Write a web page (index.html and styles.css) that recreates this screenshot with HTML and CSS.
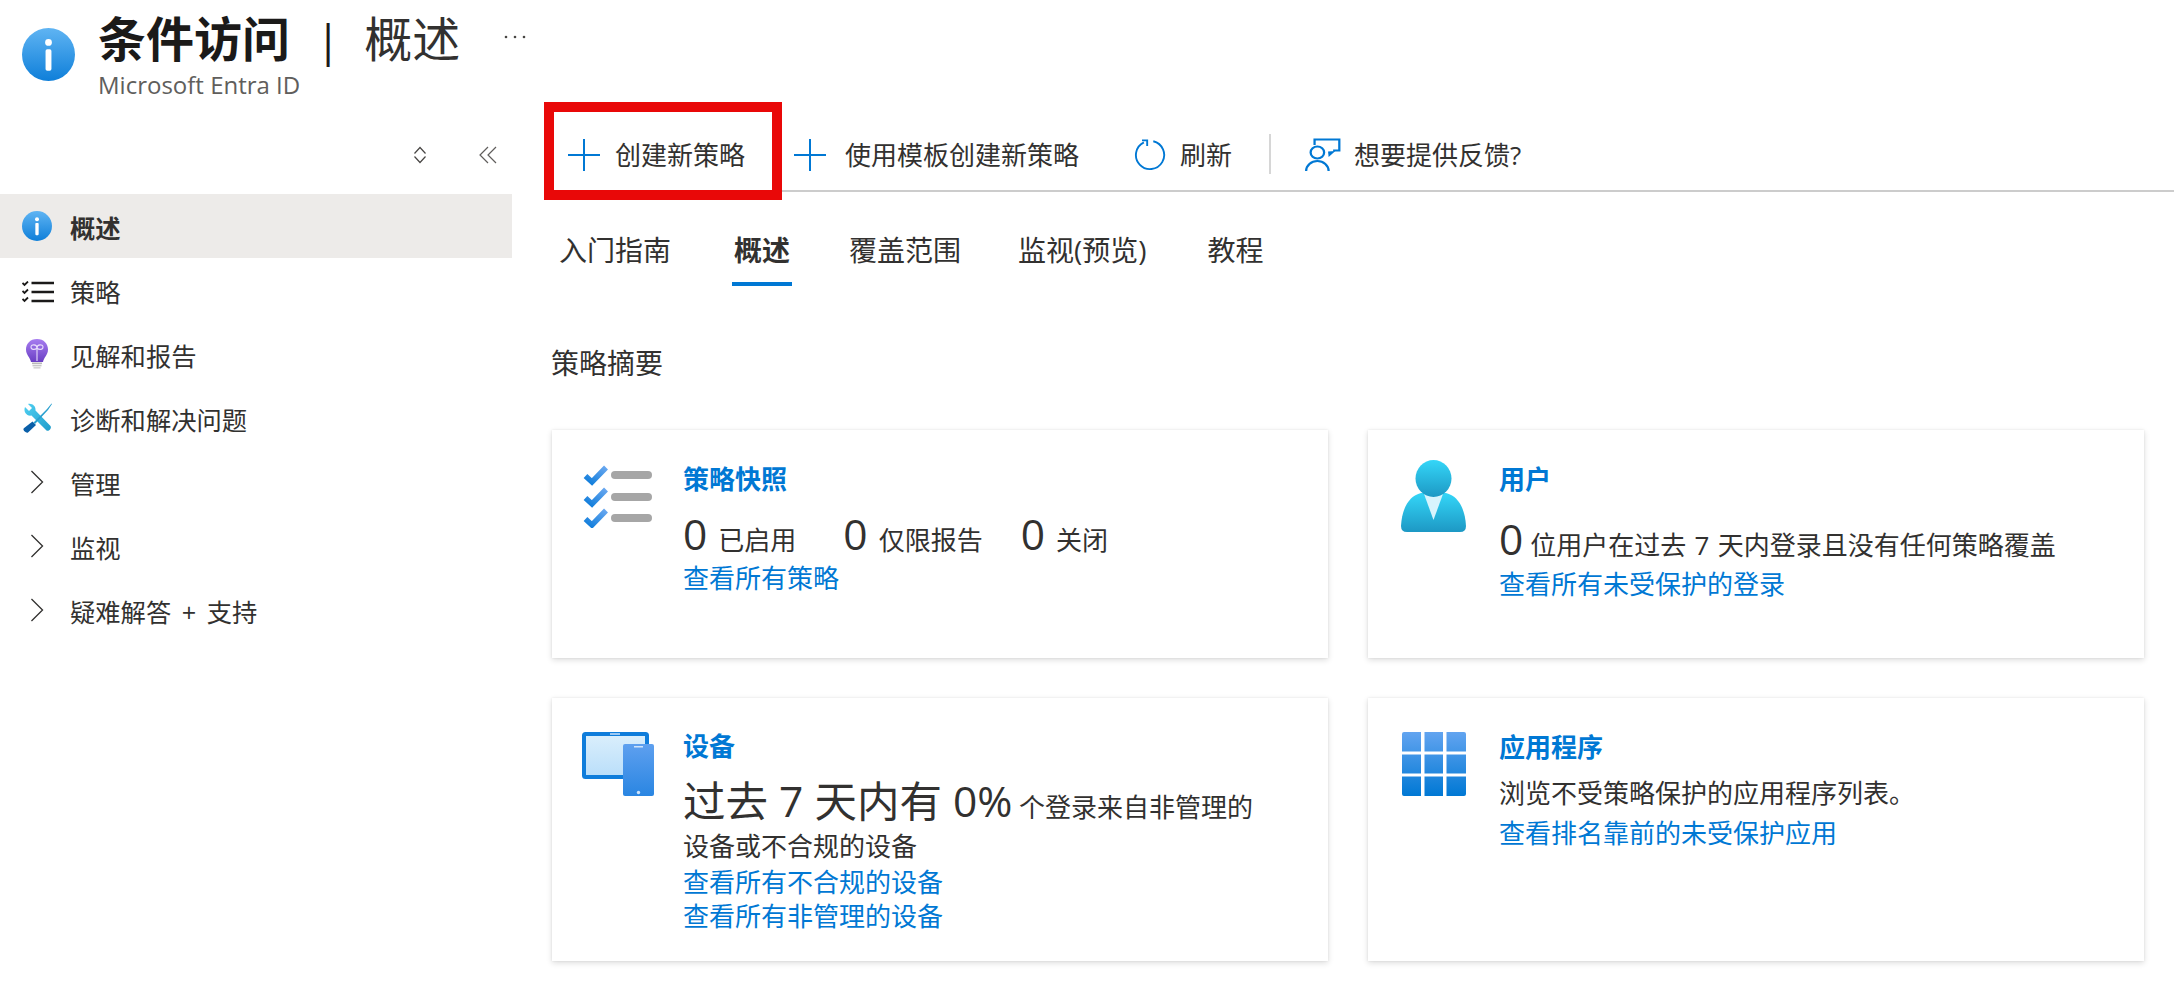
FILE: index.html
```html
<!DOCTYPE html>
<html lang="zh-CN">
  <head>
    <meta charset="UTF-8" />
    <title>条件访问 | 概述</title>
    <link rel="stylesheet" href="styles.css">
  </head>
  <body>
    <svg class="defs" width="0" height="0">
      <defs>
        <linearGradient id="gradInfo" x1="0" y1="0" x2="0" y2="1">
          <stop offset="0" stop-color="#5fb4f3" />
          <stop offset="1" stop-color="#0f7fd9" />
        </linearGradient>
        <linearGradient id="gradBulb" x1="0" y1="0" x2="0" y2="1">
          <stop offset="0" stop-color="#a77df0" />
          <stop offset="1" stop-color="#6a3fc4" />
        </linearGradient>
        <linearGradient id="gradWrench" x1="0" y1="0" x2="1" y2="1">
          <stop offset="0" stop-color="#4fd0f2" />
          <stop offset="1" stop-color="#1f9ccb" />
        </linearGradient>
        <linearGradient id="gradCheck" gradientUnits="userSpaceOnUse" x1="20" y1="0" x2="8" y2="20">
          <stop offset="0" stop-color="#6aa8f0" />
          <stop offset="1" stop-color="#0f7ddb" />
        </linearGradient>
        <linearGradient id="gradUser" x1="0" y1="0" x2="0" y2="1">
          <stop offset="0" stop-color="#34d6f8" />
          <stop offset="1" stop-color="#1d98c4" />
        </linearGradient>
        <linearGradient id="gradScreen" x1="0" y1="0" x2="0" y2="1">
          <stop offset="0" stop-color="#dbeffc" />
          <stop offset="1" stop-color="#b9defa" />
        </linearGradient>
        <linearGradient id="gradPhone" x1="0" y1="0" x2="0" y2="1">
          <stop offset="0" stop-color="#5ea0ef" />
          <stop offset="1" stop-color="#2a86e2" />
        </linearGradient>
        <linearGradient id="gradGrid" gradientUnits="userSpaceOnUse" x1="0" y1="0" x2="0" y2="64">
          <stop offset="0" stop-color="#62a4f0" />
          <stop offset="1" stop-color="#0078d4" />
        </linearGradient>
      </defs>
    </svg>

    <header class="blade-header">
      <svg class="blade-icon" viewBox="0 0 18 18">
        <circle cx="9" cy="9" r="9" fill="url(#gradInfo)" />
        <circle cx="9" cy="4.9" r="1.15" fill="#fff" />
        <rect x="8" y="7.2" width="2" height="7.3" rx="0.6" fill="#fff" />
      </svg>
      <div class="blade-titles">
        <h1 class="blade-title">
          <span class="title-main">条件访问</span>
          <span class="title-sep">|</span>
          <span class="title-sub">概述</span>
          <svg class="title-more" viewBox="0 0 24 4">
            <circle cx="3" cy="2" r="1.3" />
            <circle cx="12" cy="2" r="1.3" />
            <circle cx="21" cy="2" r="1.3" />
          </svg>
        </h1>
        <div class="blade-subtitle">Microsoft Entra ID</div>
      </div>
    </header>

    <div class="blade-body">
      <aside class="sidebar">
        <div class="sidebar-tools">
          <svg class="tool-sort" viewBox="0 0 14 18">
            <path d="M1.5 7.5 L7 1.5 L12.5 7.5 M1.5 10.5 L7 16.5 L12.5 10.5" />
          </svg>
          <svg class="tool-collapse" viewBox="0 0 18 18">
            <path d="M9 1 L1 9 L9 17 M17 1 L9 9 L17 17" />
          </svg>
        </div>
        <nav>
          <a class="nav-item active">
            <svg class="nav-icon" viewBox="0 0 18 18">
              <circle cx="9" cy="9" r="9" fill="url(#gradInfo)" />
              <circle cx="9" cy="4.9" r="1.2" fill="#fff" />
              <rect x="8" y="7.2" width="2" height="7.3" rx="0.5" fill="#fff" />
            </svg>
            <span>概述</span>
          </a>
          <a class="nav-item">
            <svg class="nav-icon nav-list" viewBox="0 0 32 24">
              <path class="list-check" d="M0.5 2 L2.5 4 L6 0.5 M0.5 10 L2.5 12 L6 8.5 M0.5 18 L2.5 20 L6 16.5" />
              <path class="list-line" d="M9.5 2 H32 M9.5 11 H32 M9.5 20 H32" />
            </svg>
            <span>策略</span>
          </a>
          <a class="nav-item">
            <svg class="nav-icon" viewBox="0 0 30 30">
              <path d="M15 0 C8 0 4 5 4 10.5 C4 16 8 18 9 23 H21 C22 18 26 16 26 10.5 C26 5 22 0 15 0 Z" fill="url(#gradBulb)" />
              <path d="M15 22 V9 M15 9 C15 5 9 5 9 8 C9 11 13 11 15 9 C17 11 21 11 21 8 C21 5 15 5 15 9" fill="none" stroke="#e8dcfb" stroke-width="1.1" />
              <rect x="10" y="23.5" width="10" height="1.6" fill="#b9b9b9" />
              <rect x="10.5" y="25.8" width="9" height="1.6" fill="#c8c8c8" />
              <rect x="11.5" y="28" width="7" height="1.6" fill="#d4d4d4" />
            </svg>
            <span>见解和报告</span>
          </a>
          <a class="nav-item">
            <svg class="nav-icon" viewBox="0 0 30 30">
              <path d="M3 4 L7 8 L10 5 L6 1 C10 0 14 3 13.5 7.5 L28.5 23 C30 25 27 29 24.5 27.5 L9.5 12.5 C5 13.5 1 9 3 4 Z" fill="url(#gradWrench)" />
              <path d="M10.5 18.5 L14 22 L6 29.5 C4 30.5 0.5 27.5 1.8 25.3 Z" fill="#0a5fa8" />
              <path d="M11.5 19.5 L25 6 L29.5 0.5 L30 1 L26 7 L13 21 Z" fill="#2aa0cf" />
            </svg>
            <span>诊断和解决问题</span>
          </a>
          <a class="nav-item">
            <svg class="nav-icon nav-chevron" viewBox="0 0 14 26"><path d="M1 1 L13 13 L1 25" /></svg>
            <span>管理</span>
          </a>
          <a class="nav-item">
            <svg class="nav-icon nav-chevron" viewBox="0 0 14 26"><path d="M1 1 L13 13 L1 25" /></svg>
            <span>监视</span>
          </a>
          <a class="nav-item">
            <svg class="nav-icon nav-chevron" viewBox="0 0 14 26"><path d="M1 1 L13 13 L1 25" /></svg>
            <span class="nav-wide">疑难解答 + 支持</span>
          </a>
        </nav>
      </aside>

      <main class="content">
        <div class="toolbar">
          <button class="tool-btn highlighted">
            <svg class="tool-icon" viewBox="0 0 32 32"><path d="M16 0 V32 M0 16 H32" /></svg>
            <span>创建新策略</span>
          </button>
          <button class="tool-btn tool-template">
            <svg class="tool-icon" viewBox="0 0 32 32"><path d="M16 0 V32 M0 16 H32" /></svg>
            <span>使用模板创建新策略</span>
          </button>
          <button class="tool-btn tool-refresh">
            <svg class="tool-icon" viewBox="0 0 32 34">
              <path d="M19.5 2.4 A15 15 0 1 1 9.5 3.5" />
              <path d="M7.5 1.5 H13 V7.5" />
            </svg>
            <span>刷新</span>
          </button>
          <div class="tool-divider"></div>
          <button class="tool-btn tool-feedback">
            <svg class="tool-icon icon-feedback" viewBox="0 0 32 34" preserveAspectRatio="none">
              <path d="M8.5 7 V1.5 H30.5 V12.5 H25" />
              <path d="M27 13 L21 19 L20.5 13.5 Z" class="tail" />
              <circle cx="11" cy="14.5" r="6" />
              <path d="M1 33 A10 10 0 0 1 21 33" />
            </svg>
            <span>想要提供反馈?</span>
          </button>
        </div>

        <div class="tabs">
          <a class="tab">入门指南</a>
          <a class="tab active">概述</a>
          <a class="tab">覆盖范围</a>
          <a class="tab">监视(预览)</a>
          <a class="tab">教程</a>
        </div>

        <h2 class="section-title">策略摘要</h2>

        <div class="cards">
          <section class="card card-short">
            <div class="card-icon">
              <svg width="69" height="63" viewBox="0 0 69 63">
                <g id="checkRow">
                  <path d="M2.5 11 L9 17 L23 2.5" fill="none" stroke="url(#gradCheck)" stroke-width="5.5" />
                  <rect x="28" y="6" width="41" height="8" rx="4" fill="#a6a6a6" />
                </g>
                <use href="#checkRow" y="22" />
                <use href="#checkRow" y="43" />
              </svg>
            </div>
            <div class="card-main">
              <a class="card-title">策略快照</a>
              <div class="stats">
                <span class="stat"><span class="big">0</span>已启用</span>
                <span class="stat"><span class="big">0</span>仅限报告</span>
                <span class="stat"><span class="big">0</span>关闭</span>
              </div>
              <a class="card-link">查看所有策略</a>
            </div>
          </section>

          <section class="card card-short">
            <div class="card-icon">
              <svg width="65" height="72" viewBox="0 0 65 72">
                <path d="M0 66 C1 48 8 36 20 33 H45 C57 36 64 48 65 66 Q65 72 59 72 H6 Q0 72 0 66 Z" fill="url(#gradUser)" />
                <path d="M23 34 H42 L32.5 60 Z" fill="#d8f4fd" />
                <ellipse cx="32.5" cy="18.5" rx="18" ry="18.5" fill="url(#gradUser)" />
              </svg>
            </div>
            <div class="card-main">
              <a class="card-title">用户</a>
              <p class="user-line"><span class="big">0</span>位用户在过去 7 天内登录且没有任何策略覆盖</p>
              <a class="card-link">查看所有未受保护的登录</a>
            </div>
          </section>

          <section class="card">
            <div class="card-icon">
              <svg width="72" height="64" viewBox="0 0 72 64">
                <rect x="2" y="2" width="63" height="43" rx="1.5" fill="url(#gradScreen)" stroke="#0f7ddb" stroke-width="4" />
                <rect x="28" y="1" width="10" height="2" fill="#9cc8f2" />
                <rect x="41" y="12" width="31" height="52" rx="2" fill="url(#gradPhone)" />
                <rect x="52" y="14" width="9" height="1.5" fill="#cfe4fb" />
                <circle cx="56.5" cy="60.5" r="1.7" fill="#cfe4fb" />
              </svg>
            </div>
            <div class="card-main card-device">
              <a class="card-title">设备</a>
              <p class="device-line"><span class="big">过去 7 天内有 0%</span> 个登录来自非管理的<br>设备或不合规的设备</p>
              <a class="card-link">查看所有不合规的设备</a>
              <a class="card-link">查看所有非管理的设备</a>
            </div>
          </section>

          <section class="card">
            <div class="card-icon">
              <svg width="64" height="64" viewBox="0 0 64 64">
                <path fill="url(#gradGrid)" d="M0 2 Q0 0 2 0 H19 V19.5 H0 Z M22.5 0 H41 V19.5 H22.5 Z M44.5 0 H62 Q64 0 64 2 V19.5 H44.5 Z M0 22.5 H19 V41.5 H0 Z M22.5 22.5 H41 V41.5 H22.5 Z M44.5 22.5 H64 V41.5 H44.5 Z M0 44.5 H19 V64 H2 Q0 64 0 62 Z M22.5 44.5 H41 V64 H22.5 Z M44.5 44.5 H64 V62 Q64 64 62 64 H44.5 Z" />
              </svg>
            </div>
            <div class="card-main">
              <a class="card-title">应用程序</a>
              <p class="app-line">浏览不受策略保护的应用程序列表。</p>
              <a class="card-link">查看排名靠前的未受保护应用</a>
            </div>
          </section>
        </div>
      </main>
    </div>
  </body>
</html>
```

FILE: styles.css
```css
:root {
  --text-color: #323130;
  --title-color: #1b1a19;
  --muted-color: #605e5c;
  --link-color: #0078d4;
  --line-color: #cccccc;
  --active-bg: #edebe9;
  --mark-color: #e90808;
}
html,
body {
  margin: 0;
  padding: 0;
  background: #fff;
  color: var(--text-color);
  font-family: "Open Sans", "Noto Sans CJK SC", sans-serif;
}
body {
  width: 2174px;
  height: 1006px;
  overflow: hidden;
}
.defs {
  position: absolute;
}

/* Header */
.blade-header {
  display: flex;
  height: 100px;
  padding-left: 22px;
  gap: 23px;
  box-sizing: border-box;
}
.blade-icon {
  width: 53px;
  height: 53px;
  margin-top: 28px;
}
.blade-titles {
  padding-top: 11px;
}
.blade-title {
  display: flex;
  align-items: center;
  height: 56px;
  margin: 0;
  font-size: 48px;
  font-weight: 400;
  line-height: 56px;
  color: var(--title-color);
}
.title-main {
  font-weight: 700;
}
.title-sep {
  margin: 0 24px 0 26px;
  font-size: 44px;
  font-weight: 400;
}
.title-sub {
  color: var(--text-color);
}
.title-more {
  width: 24px;
  height: 4px;
  margin: 0 0 4px 43px;
  fill: #484644;
}
.blade-subtitle {
  margin-top: 3px;
  font-size: 24px;
  line-height: 30px;
  color: var(--muted-color);
}

.blade-body {
  display: flex;
}

/* Sidebar */
.sidebar {
  flex: none;
  width: 512px;
}
.sidebar-tools {
  display: flex;
  justify-content: flex-end;
  align-items: center;
  gap: 52px;
  height: 94px;
  padding: 16px 15px 0 0;
  box-sizing: border-box;
}
.tool-sort {
  width: 14px;
  height: 18px;
  fill: none;
  stroke: #484644;
  stroke-width: 1.2;
}
.tool-collapse {
  width: 18px;
  height: 18px;
  fill: none;
  stroke: #605e5c;
  stroke-width: 1.2;
}
.nav-item {
  display: flex;
  align-items: center;
  gap: 18px;
  height: 64px;
  padding-left: 22px;
  font-size: 25.3px;
  color: var(--text-color);
}
.nav-item span {
  padding-top: 1px;
}
.nav-item.active {
  background: var(--active-bg);
  font-weight: 700;
}
.nav-wide {
  word-spacing: 4px;
}
.nav-icon {
  flex: none;
  width: 30px;
  height: 30px;
}
.nav-list {
  width: 32px;
  height: 24px;
  margin: 6px -2px 0 0;
}
.nav-chevron {
  height: 24px;
  fill: none;
  stroke: #323130;
  stroke-width: 1.4;
}
.list-check {
  fill: none;
  stroke: #1b1a19;
  stroke-width: 1.8;
}
.list-line {
  fill: none;
  stroke: #1b1a19;
  stroke-width: 2.4;
}

/* Toolbar */
.content {
  flex: 1;
  padding-left: 32px;
}
.toolbar {
  display: flex;
  align-items: flex-start;
  height: 92px;
  padding: 12px 0 0 10px;
  border-bottom: 2px solid var(--line-color);
  box-sizing: border-box;
}
.tool-btn {
  display: flex;
  align-items: center;
  gap: 15px;
  height: 78px;
  padding: 8px 27px 0 14px;
  box-sizing: border-box;
  border: 0;
  background: none;
  font: inherit;
  font-size: 26px;
  color: var(--text-color);
}
.tool-btn span {
  margin-bottom: 2px;
}
.tool-btn.highlighted {
  position: relative;
  outline: 10px solid var(--mark-color);
}
.tool-template {
  padding-left: 22px;
  gap: 19px;
}
.tool-refresh {
  padding-left: 28px;
  gap: 14px;
}
.tool-icon {
  flex: none;
  width: 32px;
  height: 32px;
  fill: none;
  stroke: var(--link-color);
  stroke-width: 2;
}
.icon-feedback {
  width: 36px;
  height: 34px;
}
.icon-feedback .tail {
  fill: var(--link-color);
  stroke: none;
}
.tool-divider {
  width: 2px;
  height: 40px;
  margin: 22px 10px 0 10px;
  background: #d6d6d6;
}
.tool-feedback {
  padding-left: 24px;
  gap: 13px;
}

/* Tabs */
.tabs {
  display: flex;
  height: 94px;
  padding-left: 15px;
  box-sizing: border-box;
}
.tab {
  position: relative;
  margin-right: 59px;
  padding-top: 38px;
  font-size: 28px;
  line-height: 40px;
  color: var(--text-color);
}
.tab:nth-child(3) {
  margin-right: 57px;
}
.tab:nth-child(4) {
  margin-right: 61px;
}
.tab.active {
  margin: 0 59px 0 4px;
  font-weight: 700;
}
.tab.active::after {
  content: "";
  position: absolute;
  left: -2px;
  right: -2px;
  top: 90px;
  height: 4px;
  background: var(--link-color);
}

.section-title {
  margin: 0 0 47px 7px;
  padding-top: 57px;
  font-size: 28px;
  font-weight: 400;
  line-height: 40px;
}

/* Cards */
.cards {
  display: grid;
  grid-template-columns: 776px 776px;
  grid-template-rows: 228px 263px;
  gap: 40px;
  margin-left: 8px;
}
.card {
  display: flex;
  padding-top: 30px;
  box-sizing: border-box;
  background: #fff;
  box-shadow: 0 2px 6px rgba(0, 0, 0, 0.14), 0 0 2px rgba(0, 0, 0, 0.08);
}
.card-icon {
  flex: none;
  display: flex;
  align-items: center;
  justify-content: center;
  width: 131px;
  height: 72px;
}
.card-main {
  font-size: 26px;
  line-height: 36px;
}
.card-title {
  display: block;
  position: relative;
  top: 1px;
  font-weight: 700;
  color: var(--link-color);
}
.card-link {
  display: block;
  color: var(--link-color);
}
.big {
  font-size: 42.5px;
  font-weight: 400;
}
.stats {
  display: flex;
  align-items: baseline;
  gap: 38px;
  height: 56px;
  margin-top: 8px;
  line-height: 60px;
}
.stat:first-child {
  margin-right: 9px;
}
.stat .big {
  margin-right: 11px;
}
.user-line {
  margin: 22px 0 0;
  line-height: 42px;
  white-space: nowrap;
  word-spacing: 1.5px;
}
.user-line .big {
  margin-right: 7px;
}
.card-device {
  line-height: 34px;
}
.device-line {
  margin: 9px 0 4px;
  line-height: 30px;
}
.device-line .big {
  line-height: 60px;
}
.app-line {
  margin: 11px 0 4px;
}
```
